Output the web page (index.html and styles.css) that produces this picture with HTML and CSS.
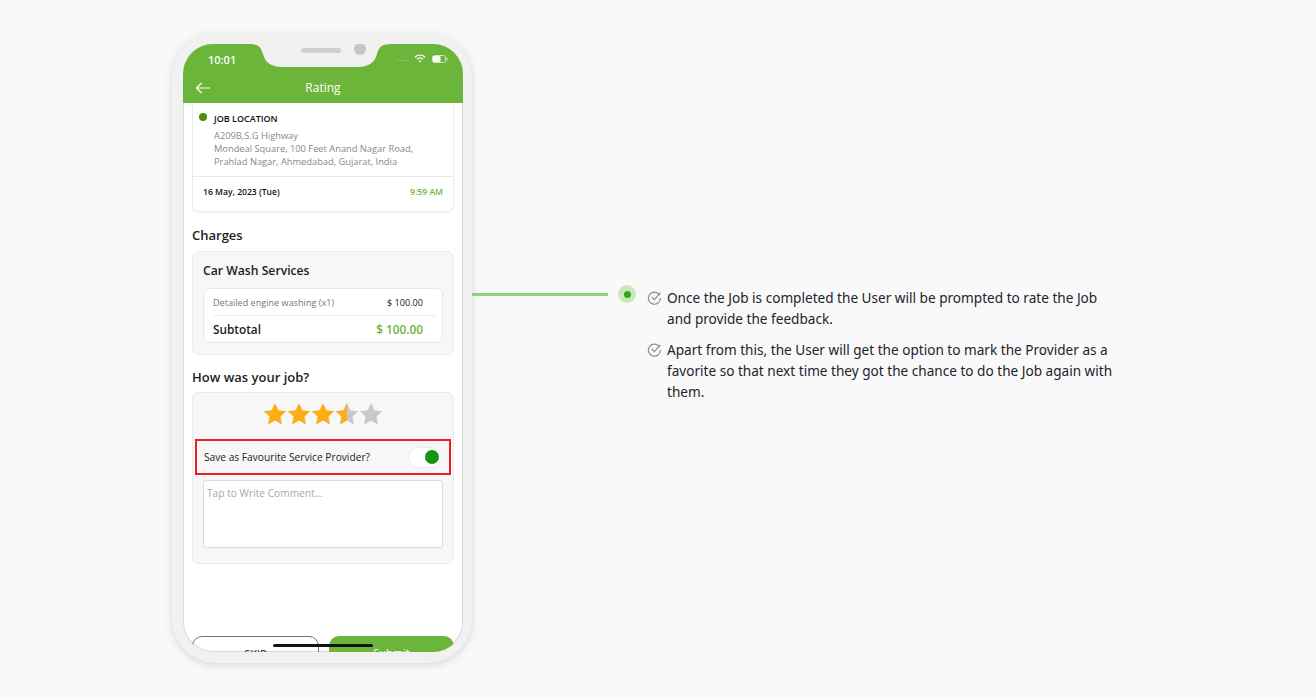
FILE: index.html
```html
<!DOCTYPE html>
<html lang="en">
<head>
	<meta charset="UTF-8">
	<meta name="viewport" content="width=device-width, initial-scale=1">
	<title>Rating</title>
	<link rel="stylesheet" href="styles.css">
</head>
<body>
	<div class="page">
		<div class="phone">
			<div class="screen">
				<svg class="notch" width="144" height="24" viewBox="0 0 144 24">
					<path d="M0 0 H144 C132 0 131 4 129 10 C127 18 121 23 110 23 H34 C23 23 17 18 15 10 C13 4 12 0 0 0 Z" fill="#f1f1f1"/>
				</svg>
				<div class="speaker"></div>
				<div class="camera"></div>

				<div class="status-bar">
					<span class="clock">10:01</span>
					<div class="status-icons">
						<span class="signal">....</span>
						<svg width="12" height="9" viewBox="0 0 12 9">
							<path d="M1 3.2 C4 0.4 8 0.4 11 3.2" fill="none" stroke="#fff" stroke-width="1.4"/>
							<path d="M3 5.2 C4.8 3.6 7.2 3.6 9 5.2" fill="none" stroke="#fff" stroke-width="1.4"/>
							<path d="M6 8.6 L4.5 6.9 C5.4 6.2 6.6 6.2 7.5 6.9 Z" fill="#fff"/>
						</svg>
						<svg width="16" height="8" viewBox="0 0 16 8">
							<rect x="0.5" y="0.5" width="13" height="7" rx="2" fill="none" stroke="#cfe6bf" stroke-width="1"/>
							<rect x="1" y="1" width="7.5" height="6" rx="1" fill="#fff"/>
							<rect x="14.4" y="2.6" width="1.2" height="2.8" fill="#cfe6bf"/>
						</svg>
					</div>
				</div>
				<header class="app-header">
					<svg class="back" width="16" height="12" viewBox="0 0 16 12">
						<path d="M15 6 H1.5 M6.5 1 L1.5 6 L6.5 11" fill="none" stroke="#fff" stroke-width="1.2"/>
					</svg>
					<h1>Rating</h1>
				</header>

				<div class="content">
					<section class="card location-card">
						<div class="location">
							<h2><span class="dot"></span>JOB LOCATION</h2>
							<p>A209B,S.G Highway<br>Mondeal Square, 100 Feet Anand Nagar Road,<br>Prahlad Nagar, Ahmedabad, Gujarat, India</p>
						</div>
						<div class="date-row">
							<span>16 May, 2023 (Tue)</span>
							<span class="time">9:59 AM</span>
						</div>
					</section>

					<h3 class="section-title charges-title">Charges</h3>
					<section class="card grey-card charges-card">
						<h4>Car Wash Services</h4>
						<div class="price-box">
							<div class="price-row">
								<span>Detailed engine washing (x1)</span>
								<span class="price">$ 100.00</span>
							</div>
							<div class="total-row">
								<span>Subtotal</span>
								<span class="total">$ 100.00</span>
							</div>
						</div>
					</section>

					<h3 class="section-title job-title">How was your job?</h3>
					<section class="card grey-card rating-card">
						<div class="stars">
							<svg class="star" viewBox="0 0 24 24"><path fill="#fdae17" d="M12 1 L15.4 8.2 L23.2 9.2 L17.5 14.6 L19 22.4 L12 18.6 L5 22.4 L6.5 14.6 L0.8 9.2 L8.6 8.2 Z"/></svg>
							<svg class="star" viewBox="0 0 24 24"><path fill="#fdae17" d="M12 1 L15.4 8.2 L23.2 9.2 L17.5 14.6 L19 22.4 L12 18.6 L5 22.4 L6.5 14.6 L0.8 9.2 L8.6 8.2 Z"/></svg>
							<svg class="star" viewBox="0 0 24 24"><path fill="#fdae17" d="M12 1 L15.4 8.2 L23.2 9.2 L17.5 14.6 L19 22.4 L12 18.6 L5 22.4 L6.5 14.6 L0.8 9.2 L8.6 8.2 Z"/></svg>
							<svg class="star" viewBox="0 0 24 24">
								<path fill="#c9c9c9" d="M12 1 L15.4 8.2 L23.2 9.2 L17.5 14.6 L19 22.4 L12 18.6 L5 22.4 L6.5 14.6 L0.8 9.2 L8.6 8.2 Z"/>
								<path fill="#fdae17" d="M12 1 L12 18.6 L5 22.4 L6.5 14.6 L0.8 9.2 L8.6 8.2 Z"/>
							</svg>
							<svg class="star" viewBox="0 0 24 24"><path fill="#c9c9c9" d="M12 1 L15.4 8.2 L23.2 9.2 L17.5 14.6 L19 22.4 L12 18.6 L5 22.4 L6.5 14.6 L0.8 9.2 L8.6 8.2 Z"/></svg>
						</div>
						<div class="favourite">
							<span>Save as Favourite Service Provider?</span>
							<span class="toggle"><span class="knob"></span></span>
						</div>
						<div class="comment">Tap to Write Comment...</div>
					</section>

					<div class="buttons">
						<div class="btn skip">SKIP</div>
						<div class="btn submit">Submit</div>
					</div>
				</div>
				<div class="home-bar"></div>
			</div>
		</div>

		<div class="connector"></div>
		<div class="marker"><span></span></div>

		<ul class="notes">
			<li>
				<svg class="check" width="15" height="15" viewBox="0 0 15 15">
					<path d="M12.6 5.2 A6 6 0 1 0 13.4 8" fill="none" stroke="#8c8c8c" stroke-width="1.2"/>
					<path d="M4.6 6.8 L7.4 9.6 L13.4 2.8" fill="none" stroke="#8c8c8c" stroke-width="1.2"/>
				</svg>
				<p>Once the Job is completed the User will be prompted to rate the Job and provide the feedback.</p>
			</li>
			<li>
				<svg class="check" width="15" height="15" viewBox="0 0 15 15">
					<path d="M12.6 5.2 A6 6 0 1 0 13.4 8" fill="none" stroke="#8c8c8c" stroke-width="1.2"/>
					<path d="M4.6 6.8 L7.4 9.6 L13.4 2.8" fill="none" stroke="#8c8c8c" stroke-width="1.2"/>
				</svg>
				<p>Apart from this, the User will get the option to mark the Provider as a favorite so that next time they got the chance to do the Job again with them.</p>
			</li>
		</ul>
	</div>
</body>
</html>
```

FILE: styles.css
```css
* {
	box-sizing: border-box;
	margin: 0;
	padding: 0;
}

body {
	background: #f9f9f9;
	font-family: "Open Sans", sans-serif;
	min-height: 699px;
	overflow: hidden;
}

.page {
	display: flex;
	align-items: flex-start;
	padding: 33px 0 0 172px;
}

/* Телефон */
.phone {
	width: 300px;
	height: 630px;
	flex: none;
	padding: 11px 9px 11px 11px;
	background: #f1f1f1;
	border-radius: 44px;
	box-shadow: 0 2px 8px rgba(0,0,0,0.14);
}

.screen {
	position: relative;
	width: 280px;
	height: 608px;
	background: #fff;
	border-radius: 30px;
	overflow: hidden;
	box-shadow: inset 0 0 0 1px #d9d9d9;
}

.notch {
	position: absolute;
	top: 0;
	left: 65px;
}

.speaker {
	position: absolute;
	top: 4px;
	left: 118px;
	width: 40px;
	height: 5px;
	border-radius: 3px;
	background: #cfcfcf;
}

.camera {
	position: absolute;
	top: -1px;
	left: 171px;
	width: 12px;
	height: 12px;
	border-radius: 50%;
	background: #c4c4c4;
}

.status-bar {
	height: 29px;
	padding: 0 15px 0 25px;
	background: #6cb53b;
	display: flex;
	justify-content: space-between;
	align-items: center;
	color: #fff;
	font-size: 11px;
	font-weight: 600;
}

.clock {
	margin-top: 1px;
}

.status-icons {
	display: flex;
	align-items: center;
	gap: 6px;
}

.signal {
	font-size: 9px;
	font-weight: 400;
	letter-spacing: 0.5px;
	color: #b5d99c;
	margin-top: -3px;
}

.app-header {
	height: 30px;
	background: #6cb53b;
	display: flex;
	justify-content: center;
	align-items: center;
	position: relative;
}

.app-header h1 {
	color: #fff;
	font-size: 12px;
	font-weight: 400;
	margin-top: -1px;
}

.back {
	position: absolute;
	left: 12px;
	top: 9px;
}

.content {
	padding: 0 9px;
}

.card {
	border: 1px solid #ebebeb;
	border-radius: 7px;
}

.grey-card {
	background: #f7f7f7;
}

.location-card {
	height: 109px;
	border-top-left-radius: 0;
	border-top-right-radius: 0;
	border-top: none;
	box-shadow: 0 1px 2px rgba(0,0,0,0.04);
}

.location {
	height: 74px;
	padding: 9px 10px 0 21px;
	border-bottom: 1px solid #e8e8e8;
}

.location h2 {
	position: relative;
	font-size: 9px;
	font-weight: 600;
	line-height: 13px;
	color: #111;
}

.dot {
	position: absolute;
	left: -15px;
	top: 1px;
	width: 8px;
	height: 8px;
	border-radius: 50%;
	background: #4a8f12;
}

.location p {
	margin-top: 4px;
	font-size: 9.3px;
	line-height: 13px;
	color: #888;
}

.date-row {
	display: flex;
	justify-content: space-between;
	padding: 9px 10px 0 10px;
	font-size: 8.6px;
	font-weight: 600;
	color: #111;
}

.time {
	color: #6cb53b;
}

.section-title {
	font-size: 13px;
	font-weight: 600;
	line-height: 18px;
	color: #1d1d1d;
}

.charges-title {
	margin-top: 14px;
}

.charges-card {
	height: 104px;
	margin-top: 7px;
	padding: 10px 10px 0;
}

.charges-card h4 {
	font-size: 12.2px;
	font-weight: 600;
	line-height: 17px;
	color: #1d1d1d;
}

.price-box {
	margin-top: 9px;
	height: 55px;
	background: #fff;
	border: 1px solid #e8e8e8;
	border-radius: 7px;
	padding: 0 6px 0 9px;
}

.price-row {
	height: 27px;
	display: flex;
	justify-content: space-between;
	align-items: center;
	padding-right: 13px;
	border-bottom: 1px solid #eee;
	font-size: 9.1px;
	color: #777;
}

.price {
	color: #222;
}

.total-row {
	height: 26px;
	display: flex;
	justify-content: space-between;
	align-items: center;
	padding-right: 13px;
	font-size: 11.8px;
	font-weight: 600;
	color: #1d1d1d;
}

.total {
	color: #6cb53b;
}

.job-title {
	margin-top: 13px;
}

.rating-card {
	height: 172px;
	margin-top: 6px;
	padding: 9px 10px 0;
}

.stars {
	display: flex;
	justify-content: center;
}

.star {
	width: 24px;
	height: 24px;
}

/* Красная рамка вокруг переключателя */
.favourite {
	margin: 13px -8px 0;
	height: 36px;
	padding: 0 8px;
	border: 2px solid #ee1c25;
	display: flex;
	justify-content: space-between;
	align-items: center;
	font-size: 10.2px;
	color: #222;
}

.favourite span:first-child {
	margin-left: -1px;
}

.toggle {
	width: 34px;
	height: 21px;
	border-radius: 11px;
	background: #fff;
	border: 1px solid #ececec;
	display: flex;
	justify-content: flex-end;
	align-items: center;
	padding-right: 2px;
	margin-right: -1px;
}

.knob {
	width: 14px;
	height: 14px;
	border-radius: 50%;
	background: #1a9311;
}

.comment {
	margin-top: 5px;
	height: 68px;
	background: #fff;
	border: 1px solid #dcdcdc;
	border-radius: 3px;
	padding: 4px 3px;
	font-size: 10.2px;
	line-height: 16px;
	color: #a8a8a8;
}

.buttons {
	display: flex;
	gap: 10px;
	margin-top: 72px;
}

.btn {
	flex: 1;
	height: 44px;
	border-radius: 10px;
	text-align: center;
	font-size: 11px;
	padding-top: 9px;
}

.skip {
	border: 1px solid #6d7378;
	color: #222;
}

.submit {
	background: #6cb53b;
	color: #fff;
}

.home-bar {
	position: absolute;
	left: 90px;
	top: 600px;
	width: 100px;
	height: 3px;
	border-radius: 2px;
	background: #111;
}

/* Пояснения справа */
.connector {
	width: 136px;
	height: 3px;
	flex: none;
	margin-top: 260px;
	background: #93d07f;
}

.marker {
	width: 18px;
	height: 18px;
	flex: none;
	margin: 252px 0 0 10px;
	border-radius: 50%;
	background: #c9e8bd;
	display: flex;
	justify-content: center;
	align-items: center;
}

.marker span {
	width: 7px;
	height: 7px;
	border-radius: 50%;
	background: #35a616;
}

.notes {
	list-style: none;
	width: 470px;
	flex: none;
	margin: 254px 0 0 11px;
}

.notes li {
	display: flex;
	gap: 5px;
	margin-bottom: 10px;
	font-family: "Noto Sans", sans-serif;
	font-size: 13.6px;
	line-height: 21px;
	color: #22242c;
}

.check {
	flex: none;
	margin-top: 3px;
}
```
